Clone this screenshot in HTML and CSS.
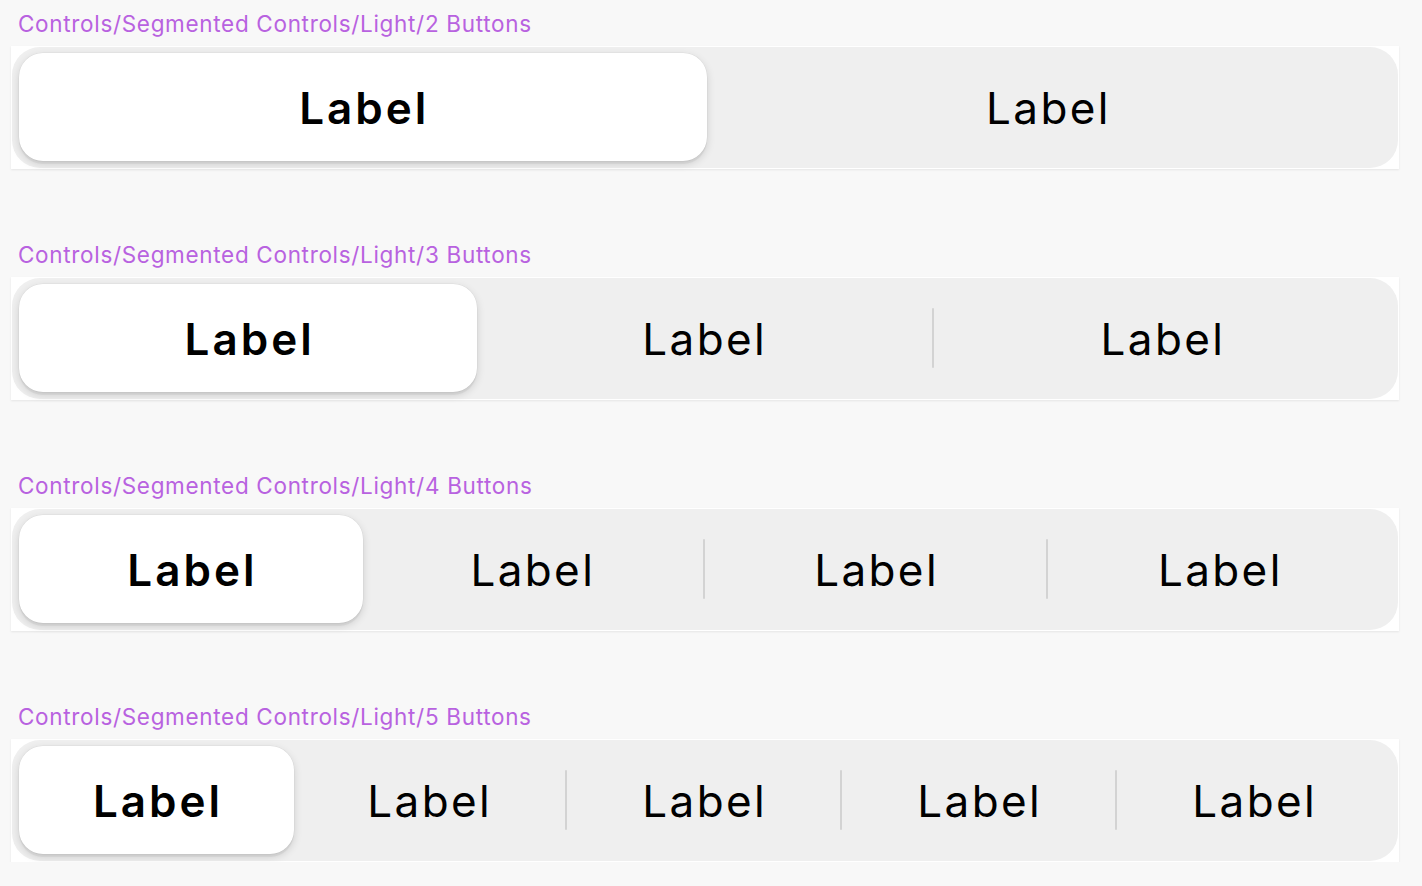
FILE: index.html
```html
<!DOCTYPE html>
<html>
<head>
<meta charset="utf-8">
<link rel="stylesheet" href="styles.css">
</head>
<body>
<section class="comp">
  <div class="title">Controls/Segmented Controls/Light/2 Buttons</div>
  <div class="frame">
    <div class="track">
      <div class="seg selected">Label</div>
      <div class="seg">Label</div>
    </div>
  </div>
</section>
<section class="comp">
  <div class="title">Controls/Segmented Controls/Light/3 Buttons</div>
  <div class="frame">
    <div class="track">
      <div class="seg selected">Label</div>
      <div class="seg">Label</div>
      <div class="divider"></div>
      <div class="seg">Label</div>
    </div>
  </div>
</section>
<section class="comp">
  <div class="title">Controls/Segmented Controls/Light/4 Buttons</div>
  <div class="frame">
    <div class="track">
      <div class="seg selected">Label</div>
      <div class="seg">Label</div>
      <div class="divider"></div>
      <div class="seg">Label</div>
      <div class="divider"></div>
      <div class="seg">Label</div>
    </div>
  </div>
</section>
<section class="comp">
  <div class="title">Controls/Segmented Controls/Light/5 Buttons</div>
  <div class="frame">
    <div class="track">
      <div class="seg selected">Label</div>
      <div class="seg">Label</div>
      <div class="divider"></div>
      <div class="seg">Label</div>
      <div class="divider"></div>
      <div class="seg">Label</div>
      <div class="divider"></div>
      <div class="seg">Label</div>
    </div>
  </div>
</section>
</body>
</html>
```
FILE: styles.css
```css
html, body {
  margin: 0;
  padding: 0;
  background: #f8f8f8;
}
body {
  padding: 10px 0 0 11px;
  font-family: Inter, "Noto Sans", sans-serif;
  overflow: hidden;
}
.comp {
  width: 1388px;
  height: 231px;
}
.comp:last-child {
  height: auto;
}
.title {
  color: #b862e0;
  font-size: 22.5px;
  letter-spacing: 0.68px;
  line-height: 28px;
  padding-left: 7px;
  margin-bottom: 8px;
  white-space: nowrap;
}
.frame {
  background: #ffffff;
  height: 123px;
  box-sizing: border-box;
  padding: 1px;
  box-shadow: 0 1px 2px rgba(0, 0, 0, 0.08);
}
.track {
  height: 121px;
  box-sizing: border-box;
  background: #efefef;
  border-radius: 28px;
  padding: 6px 7px 7px 7px;
  display: flex;
  align-items: stretch;
}
.seg {
  flex: 1 1 0;
  display: flex;
  align-items: center;
  justify-content: center;
  font-size: 44px;
  font-weight: 400;
  letter-spacing: 2.4px;
  text-indent: 2.4px;
  color: #000;
  border-radius: 24px;
  padding-top: 2px;
}
.seg.selected {
  position: relative;
  margin-right: -3px;
  background: #ffffff;
  font-weight: 600;
  letter-spacing: 3px;
  text-indent: 3px;
  box-shadow: 0 3px 8px rgba(0, 0, 0, 0.14), 0 3px 1px rgba(0, 0, 0, 0.05), 0 0 0 0.5px rgba(0, 0, 0, 0.05);
}
.divider {
  flex: 0 0 2px;
  width: 2px;
  height: 60px;
  margin: 0 -1px;
  align-self: center;
  background: #d3d3d3;
  border-radius: 1px;
}
```
